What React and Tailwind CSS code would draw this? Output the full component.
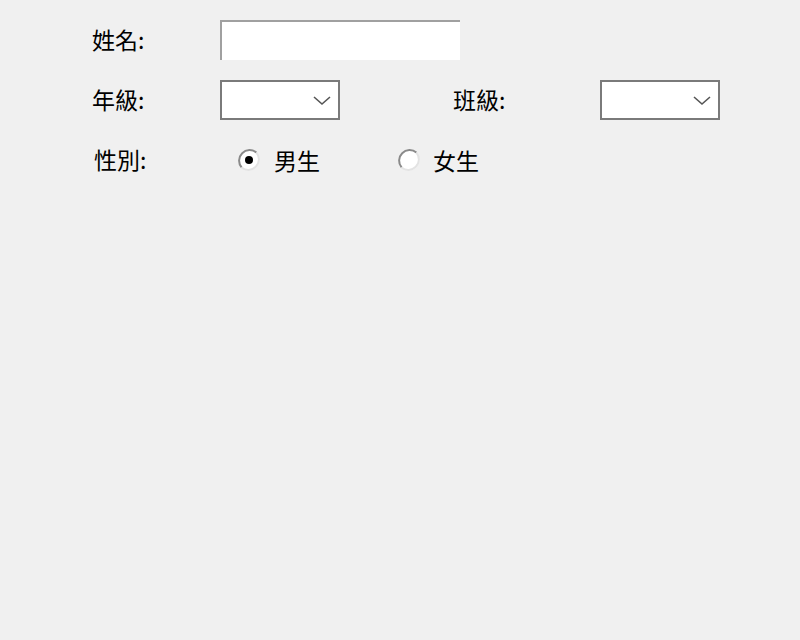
import React, { useState } from 'react';

/* ---------- 學生資料表單 ---------- */

const font = "font-['Microsoft_JhengHei','Noto_Sans_CJK_TC',sans-serif]";

function Chevron() {
  return (
    <svg width="18" height="10" viewBox="0 0 18 10" className="absolute right-[7px] top-[14px]">
      <path d="M1 1 L9 8 L17 1" fill="none" stroke="#555" strokeWidth="1.6" />
    </svg>
  );
}

function Combo() {
  return (
    <div className="relative w-[120px] h-[40px] bg-white border-2 border-[#7a7a7a]">
      <Chevron />
    </div>
  );
}

function Radio({ checked }) {
  return (
    <svg width="24" height="24" viewBox="0 0 24 24">
      <circle cx="12" cy="12" r="10.5" fill="#fff" />
      {/* 左上凹陷，右下亮邊 */}
      <path d="M4.6 19.4 A10.5 10.5 0 0 1 19.4 4.6" fill="none" stroke="#8a8a8a" strokeWidth="2" />
      <path d="M19.4 4.6 A10.5 10.5 0 0 1 4.6 19.4" fill="none" stroke="#e3e3e3" strokeWidth="2" />
      {checked && <circle cx="12" cy="12" r="4" fill="#000" />}
    </svg>
  );
}

export default function App() {
  const [gender, setGender] = useState('m');

  return (
    <div className={"w-[800px] h-[640px] bg-[#f0f0f0] text-black text-[23px] leading-[40px] " + font}>
      <div className="pl-[92px] pt-[20px] flex flex-col gap-[20px]">
        <div className="flex items-center h-[40px]">
          <div className="w-[128px] -mt-[3px]">姓名:</div>
          <div className="w-[240px] h-[40px] bg-white border-t-2 border-l-2 border-[#a0a0a0]" />
        </div>

        <div className="flex items-center h-[40px]">
          <div className="w-[128px] -mt-[3px]">年級:</div>
          <Combo />
          <div className="w-[113px]" />
          <div className="w-[147px] -mt-[3px]">班級:</div>
          <Combo />
        </div>

        <div className="flex items-center h-[40px]">
          <div className="w-[145px] pl-[2px] -mt-[3px]">性別:</div>
          <button className="flex items-center gap-[13px] w-[160px]" onClick={() => setGender('m')}>
            <Radio checked={gender === 'm'} />
            <span>男生</span>
          </button>
          <button className="flex items-center gap-[12px]" onClick={() => setGender('f')}>
            <Radio checked={gender === 'f'} />
            <span>女生</span>
          </button>
        </div>
      </div>
    </div>
  );
}
